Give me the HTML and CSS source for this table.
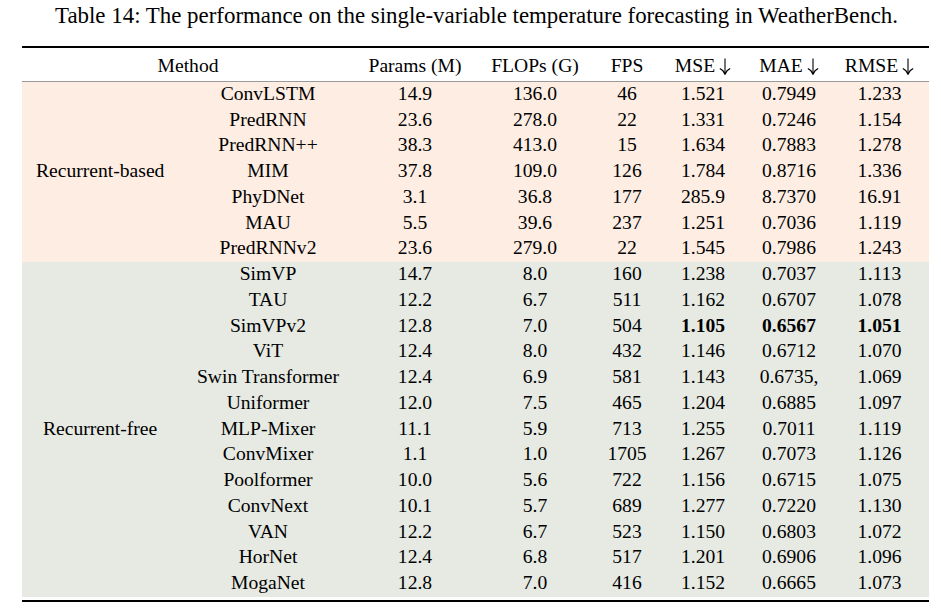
FILE: index.html
```html
<!DOCTYPE html>
<html>
<head>
<meta charset="utf-8">
<link rel="stylesheet" href="styles.css">
</head>
<body>
<div class="page">
  <p class="caption">Table 14: The performance on the single-variable temperature forecasting in WeatherBench.</p>
  <table class="results">
    <colgroup>
      <col class="c-group"><col class="c-name"><col class="c-params"><col class="c-flops"><col class="c-fps"><col class="c-mse"><col class="c-mae"><col class="c-rmse">
    </colgroup>
    <thead>
      <tr>
        <th colspan="2" class="method-head">Method</th>
        <th>Params (M)</th>
        <th>FLOPs (G)</th>
        <th>FPS</th>
        <th>MSE<svg class="arrow" viewBox="0 0 12 17" width="12" height="17"><path d="M6 0.5V16" /><path d="M0.8 10.6C3.2 11.8 5.2 13.6 6 16.3C6.8 13.6 8.8 11.8 11.2 10.6" /></svg></th>
        <th>MAE<svg class="arrow" viewBox="0 0 12 17" width="12" height="17"><path d="M6 0.5V16" /><path d="M0.8 10.6C3.2 11.8 5.2 13.6 6 16.3C6.8 13.6 8.8 11.8 11.2 10.6" /></svg></th>
        <th>RMSE<svg class="arrow" viewBox="0 0 12 17" width="12" height="17"><path d="M6 0.5V16" /><path d="M0.8 10.6C3.2 11.8 5.2 13.6 6 16.3C6.8 13.6 8.8 11.8 11.2 10.6" /></svg></th>
      </tr>
    </thead>
    <tbody class="rb">
      <tr><td rowspan="7" class="group">Recurrent-based</td><td>ConvLSTM</td><td>14.9</td><td>136.0</td><td>46</td><td>1.521</td><td>0.7949</td><td>1.233</td></tr>
      <tr><td>PredRNN</td><td>23.6</td><td>278.0</td><td>22</td><td>1.331</td><td>0.7246</td><td>1.154</td></tr>
      <tr><td>PredRNN++</td><td>38.3</td><td>413.0</td><td>15</td><td>1.634</td><td>0.7883</td><td>1.278</td></tr>
      <tr><td>MIM</td><td>37.8</td><td>109.0</td><td>126</td><td>1.784</td><td>0.8716</td><td>1.336</td></tr>
      <tr><td>PhyDNet</td><td>3.1</td><td>36.8</td><td>177</td><td>285.9</td><td>8.7370</td><td>16.91</td></tr>
      <tr><td>MAU</td><td>5.5</td><td>39.6</td><td>237</td><td>1.251</td><td>0.7036</td><td>1.119</td></tr>
      <tr><td>PredRNNv2</td><td>23.6</td><td>279.0</td><td>22</td><td>1.545</td><td>0.7986</td><td>1.243</td></tr>
    </tbody>
    <tbody class="rf">
      <tr><td rowspan="13" class="group free">Recurrent-free</td><td>SimVP</td><td>14.7</td><td>8.0</td><td>160</td><td>1.238</td><td>0.7037</td><td>1.113</td></tr>
      <tr><td>TAU</td><td>12.2</td><td>6.7</td><td>511</td><td>1.162</td><td>0.6707</td><td>1.078</td></tr>
      <tr><td>SimVPv2</td><td>12.8</td><td>7.0</td><td>504</td><td class="best">1.105</td><td class="best">0.6567</td><td class="best">1.051</td></tr>
      <tr><td>ViT</td><td>12.4</td><td>8.0</td><td>432</td><td>1.146</td><td>0.6712</td><td>1.070</td></tr>
      <tr><td>Swin Transformer</td><td>12.4</td><td>6.9</td><td>581</td><td>1.143</td><td>0.6735,</td><td>1.069</td></tr>
      <tr><td>Uniformer</td><td>12.0</td><td>7.5</td><td>465</td><td>1.204</td><td>0.6885</td><td>1.097</td></tr>
      <tr><td>MLP-Mixer</td><td>11.1</td><td>5.9</td><td>713</td><td>1.255</td><td>0.7011</td><td>1.119</td></tr>
      <tr><td>ConvMixer</td><td>1.1</td><td>1.0</td><td>1705</td><td>1.267</td><td>0.7073</td><td>1.126</td></tr>
      <tr><td>Poolformer</td><td>10.0</td><td>5.6</td><td>722</td><td>1.156</td><td>0.6715</td><td>1.075</td></tr>
      <tr><td>ConvNext</td><td>10.1</td><td>5.7</td><td>689</td><td>1.277</td><td>0.7220</td><td>1.130</td></tr>
      <tr><td>VAN</td><td>12.2</td><td>6.7</td><td>523</td><td>1.150</td><td>0.6803</td><td>1.072</td></tr>
      <tr><td>HorNet</td><td>12.4</td><td>6.8</td><td>517</td><td>1.201</td><td>0.6906</td><td>1.096</td></tr>
      <tr><td>MogaNet</td><td>12.8</td><td>7.0</td><td>416</td><td>1.152</td><td>0.6665</td><td>1.073</td></tr>
    </tbody>
  </table>
</div>
</body>
</html>
```

FILE: styles.css
```css
html, body {
  margin: 0;
  padding: 0;
  background: #ffffff;
}

body {
  font-family: "Liberation Serif", "Times New Roman", serif;
  color: #000;
}

.page {
  padding: 0 12px 0 22px;
  width: 907px;
}

.caption {
  margin: 0;
  padding: 2px 0 0 2px;
  height: 46px;
  box-sizing: border-box;
  font-size: 22.9px;
  line-height: 28px;
  text-align: center;
  white-space: nowrap;
}

.results {
  width: 907px;
  border-collapse: separate;
  border-spacing: 0;
  table-layout: fixed;
  border-top: 2px solid #000;
  border-bottom: 2px solid #000;
  padding: 0 0 3px 0;
  font-size: 19.6px;
}

.c-group { width: 168px; }
.c-name { width: 156px; }
.c-params { width: 138px; }
.c-flops { width: 102px; }
.c-fps { width: 82px; }
.c-mse { width: 70px; }
.c-mae { width: 102px; }
.c-rmse { width: 89px; }

.results th {
  font-weight: normal;
  height: 30px;
  padding: 3px 0 0 0;
  text-align: center;
  white-space: nowrap;
  border-bottom: 1px solid #9a9a9a;
}

.results th.method-head {
  padding-left: 8px;
}

.results th:last-child,
.results td:last-child {
  padding-right: 10px;
}

.arrow {
  margin-left: 4px;
  vertical-align: -3px;
  fill: none;
  stroke: #000;
  stroke-width: 1.1;
}

.results td {
  height: 23.75px;
  padding: 0 0 2px 0;
  text-align: center;
  white-space: nowrap;
  line-height: 22px;
}

.rb td { background: #fdede2; }
.rf td { background: #e6eae3; }

.results td.group {
  text-align: left;
  padding-left: 14px;
  vertical-align: middle;
}

.results td.group.free {
  padding-left: 21px;
}

.best { font-weight: bold; }
```
